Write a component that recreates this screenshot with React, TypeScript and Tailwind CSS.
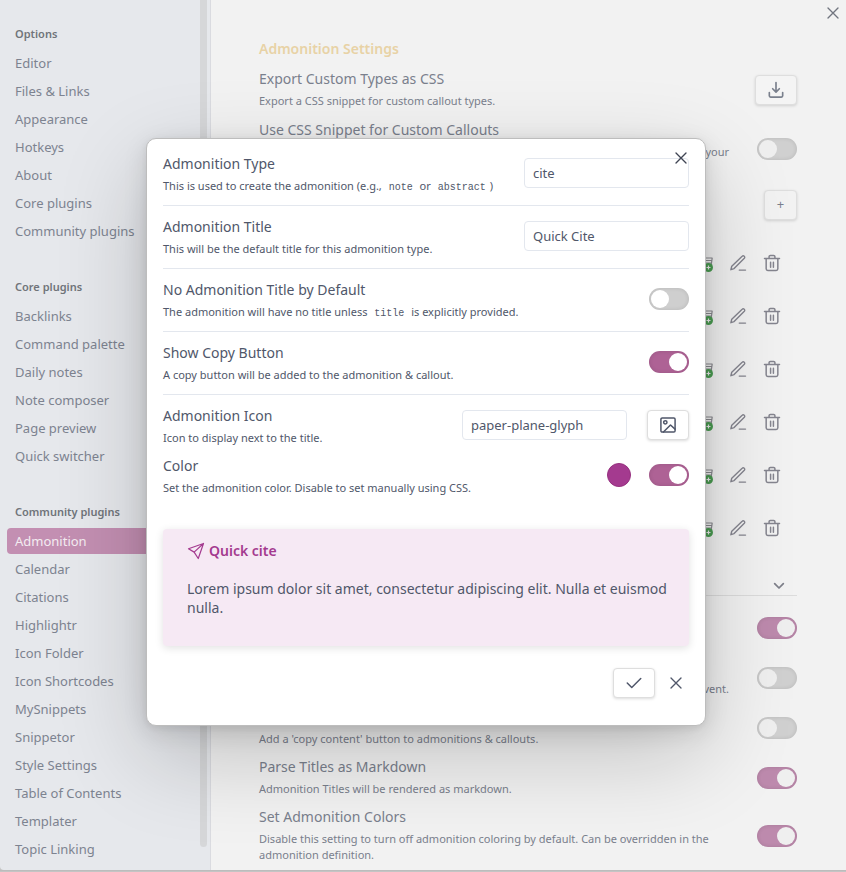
import React from "react";
import type { ReactNode } from "react";

const groups = [
  {
    title: "Options",
    items: ["Editor", "Files & Links", "Appearance", "Hotkeys", "About", "Core plugins", "Community plugins"],
  },
  {
    title: "Core plugins",
    items: ["Backlinks", "Command palette", "Daily notes", "Note composer", "Page preview", "Quick switcher"],
  },
  {
    title: "Community plugins",
    items: [
      "Admonition",
      "Calendar",
      "Citations",
      "Highlightr",
      "Icon Folder",
      "Icon Shortcodes",
      "MySnippets",
      "Snippetor",
      "Style Settings",
      "Table of Contents",
      "Templater",
      "Topic Linking",
    ],
  },
];

function Icon({ size, width = 2, className, children }: { size: number; width?: number; className?: string; children: ReactNode }) {
  return (
    <svg
      width={size}
      height={size}
      viewBox="0 0 24 24"
      fill="none"
      stroke="currentColor"
      strokeWidth={width}
      strokeLinecap="round"
      strokeLinejoin="round"
      className={className}
      aria-hidden="true"
    >
      {children}
    </svg>
  );
}

const CrossIcon = () => (
  <Icon size={16} width={2}>
    <path d="M4.5 4.5l15 15M19.5 4.5l-15 15" />
  </Icon>
);

const DownloadIcon = () => (
  <Icon size={20}>
    <path d="M4 15v4a1.5 1.5 0 0 0 1.5 1.5h13a1.5 1.5 0 0 0 1.5-1.5v-4M8 10.500l4 4 4-4M12 3v11.500" />
  </Icon>
);

const PencilIcon = () => (
  <Icon size={20} width={1.7}>
    <path d="M3.500 20l1-4.200L17 4a1.700 1.700 0 0 1 2.600 2.400L7.300 18.700zM13.500 20.500h7.500" />
  </Icon>
);

const TrashIcon = () => (
  <Icon size={20} width={1.8}>
    <path d="M3 6.500h18M8.500 6.500V4.500a1.500 1.500 0 0 1 1.500-1.500h4a1.500 1.500 0 0 1 1.500 1.500v2M5 6.500v12.500a2 2 0 0 0 2 2h10a2 2 0 0 0 2-2V6.500M10.300 11v6M13.700 11v6" />
  </Icon>
);

const PictureIcon = () => (
  <Icon size={20} width={1.8}>
    <rect x="3.500" y="3.500" width="17" height="17" rx="1.500" />
    <circle cx="8.800" cy="8.800" r="2" />
    <path d="M6.500 20.500l8.500-8.500 5.500 5" />
  </Icon>
);

const CalloutIcon = () => (
  <svg width="18" height="18" viewBox="0 0 18 18" fill="none" className="mr-[15px] text-[#8a8a90]" aria-hidden="true">
    <path d="M2 4h15.500M3 6.500h14M4 9h12.500M17.200 4l-1 7" stroke="currentColor" strokeWidth="1.200" />
    <circle cx="13.500" cy="13.500" r="4.500" fill="#4b9d52" />
    <path d="M11.500 13.500h4M13.500 11.500v4" stroke="#f0f0f0" strokeWidth="1.200" />
  </svg>
);

function Toggle({ label, on = false, faded = false }: { label: string; on?: boolean; faded?: boolean }) {
  const tone = faded
    ? "bg-[#d0d0d0] checked:bg-[#bd8aad] before:bg-[#efefef]"
    : "bg-[#cfcfcf] checked:bg-[#ae6295] before:bg-white";
  return (
    <input
      type="checkbox"
      role="switch"
      aria-label={label}
      defaultChecked={on}
      className={`h-[22px] w-10 shrink-0 appearance-none rounded-full p-[2px] shadow-[inset_0_0_4px_rgba(0,0,0,0.12)] before:block before:size-[18px] before:rounded-full before:content-[''] checked:before:ml-[18px] ${tone}`}
    />
  );
}

function Setting({ title, desc, end = false, children }: { title?: string; desc?: ReactNode; end?: boolean; children?: ReactNode }) {
  return (
    <div className="flex items-center gap-7">
      <div className="min-w-0 flex-1">
        <div className="min-h-[18px] text-[14px] leading-[18px]">{title}</div>
        <div className={`mt-[5px] min-h-4 text-[11px] leading-4 ${end ? "text-right" : ""}`}>{desc}</div>
      </div>
      {children}
    </div>
  );
}

function ModalRow({ title, desc, children }: { title: string; desc: ReactNode; children: ReactNode }) {
  return (
    <div className="flex items-center gap-5">
      <div className="min-w-0 flex-1">
        <div className="text-[14px] leading-[18px]">{title}</div>
        <div className="mt-[5px] whitespace-nowrap text-[11px] leading-4">{desc}</div>
      </div>
      <div className="flex items-center gap-5 pb-[3px]">{children}</div>
    </div>
  );
}

const Code = ({ children }: { children: ReactNode }) => (
  <code className="px-1 font-['Liberation_Mono',monospace] text-[10px] leading-none">{children}</code>
);

const field =
  "h-[30px] w-[165px] rounded-[4px] border border-[#e3e7ee] bg-white px-2 text-[13px] text-[#50576a] outline-none";
const raised = "flex h-[30px] items-center justify-center rounded-[4px] border shadow-[0_1px_3px_rgba(0,0,0,0.14)]";

function Sidebar() {
  return (
    <aside className="flex w-[211px] shrink-0 border-r border-[#dadbe0] bg-[#e6e8ec]">
      <nav className="flex min-w-0 flex-1 flex-col gap-[31px] pl-[7px] pt-[23px]">
        {groups.map((group) => (
          <section key={group.title}>
            <h2 className="mb-[5px] pl-2 text-[11px] font-semibold leading-[21px] text-[#70747a]">{group.title}</h2>
            <ul>
              {group.items.map((item) => (
                <li key={item} className="h-7 pt-px">
                  <a
                    href="#"
                    className={`block h-[26px] rounded-l-[4px] pl-2 text-[13px] leading-[26px] ${
                      item === "Admonition" ? "bg-[#c38fb2] text-[#f3ecf1]" : "text-[#7d8390]"
                    }`}
                  >
                    {item}
                  </a>
                </li>
              ))}
            </ul>
          </section>
        ))}
      </nav>
      <div className="mb-[23px] mr-[3px] w-[7px] rounded-b-full bg-[#d6d7d9]" />
    </aside>
  );
}

function SettingsPane() {
  return (
    <main className="relative min-w-0 flex-1 bg-[#f2f2f2] pl-12 pr-[49px] pt-10 text-[#7a808d]">
      <button aria-label="Close settings" className="absolute right-[5px] top-[5px] text-[#71757f]">
        <CrossIcon />
      </button>
      <h1 className="text-[14px] font-semibold leading-[18px] text-[#e8d2a6]">Admonition Settings</h1>
      <div className="mt-3 flex flex-col gap-3">
        <Setting title="Export Custom Types as CSS" desc="Export a CSS snippet for custom callout types.">
          <button aria-label="Export" className={`${raised} w-[42px] border-[#dedede] bg-[#f4f4f4]`}>
            <DownloadIcon />
          </button>
        </Setting>
        <Setting
          title="Use CSS Snippet for Custom Callouts"
          desc={<div className="h-8 text-right">your</div>}
        >
          <Toggle faded label="Use CSS Snippet for Custom Callouts" />
        </Setting>
      </div>
      <div className="mt-[14px] flex justify-end">
        <button aria-label="Add new type" className={`${raised} w-[33px] border-[#dedede] bg-[#f2f2f2] text-[13px]`}>
          +
        </button>
      </div>
      <ul className="mt-4">
        {[0, 1, 2, 3, 4, 5].map((row) => (
          <li key={row} className="flex h-[53px] items-center justify-end pr-[15px]">
            <CalloutIcon />
            <button aria-label="Edit" className="mr-[14px] text-[#85858f]">
              <PencilIcon />
            </button>
            <button aria-label="Delete" className="text-[#85858f]">
              <TrashIcon />
            </button>
          </li>
        ))}
      </ul>
      <div className="mt-[22px] flex h-5 justify-end border-b border-[#dcdcdc] pr-[10px] pt-[2px]">
        <Icon size={16} width={2.6} className="text-[#7d7f89]">
          <path d="M5.500 8.500L12 15l6.500-6.500" />
        </Icon>
      </div>
      <div className="mt-3 flex flex-col gap-[11px]">
        <Setting>
          <Toggle faded on label="Sync links" />
        </Setting>
        <Setting end desc="event.">
          <Toggle faded label="Collapse" />
        </Setting>
        <Setting desc="Add a 'copy content' button to admonitions & callouts.">
          <Toggle faded label="Add Copy Button" />
        </Setting>
        <Setting title="Parse Titles as Markdown" desc="Admonition Titles will be rendered as markdown.">
          <Toggle faded on label="Parse Titles as Markdown" />
        </Setting>
        <Setting
          title="Set Admonition Colors"
          desc="Disable this setting to turn off admonition coloring by default. Can be overridden in the admonition definition."
        >
          <Toggle faded on label="Set Admonition Colors" />
        </Setting>
      </div>
    </main>
  );
}

function AdmonitionModal() {
  return (
    <div
      role="dialog"
      aria-label="Edit admonition"
      className="relative w-[560px] max-w-full rounded-[10px] border border-[#bdbdbd] bg-white p-4 pb-[27px] text-[#50576a] shadow-[0_2px_7px_rgba(0,0,0,0.07),0_6px_25px_rgba(0,0,0,0.11),0_30px_90px_rgba(0,0,0,0.2)]"
    >
      <div className="divide-y divide-[#e3e7ee]">
        <div className="pb-[11px]">
          <ModalRow
            title="Admonition Type"
            desc={
              <>
                This is used to create the admonition (e.g., <Code>note</Code> or <Code>abstract</Code>)
              </>
            }
          >
            <input aria-label="Admonition Type" defaultValue="cite" className={field} />
          </ModalRow>
        </div>
        <div className="pb-[11px] pt-3">
          <ModalRow title="Admonition Title" desc="This will be the default title for this admonition type.">
            <input aria-label="Admonition Title" defaultValue="Quick Cite" className={field} />
          </ModalRow>
        </div>
        <div className="pb-[11px] pt-3">
          <ModalRow
            title="No Admonition Title by Default"
            desc={
              <>
                The admonition will have no title unless <Code>title</Code> is explicitly provided.
              </>
            }
          >
            <Toggle label="No Admonition Title by Default" />
          </ModalRow>
        </div>
        <div className="pb-[11px] pt-3">
          <ModalRow title="Show Copy Button" desc="A copy button will be added to the admonition & callout.">
            <Toggle on label="Show Copy Button" />
          </ModalRow>
        </div>
        <div className="pb-[11px] pt-3">
          <ModalRow title="Admonition Icon" desc="Icon to display next to the title.">
            <input aria-label="Admonition Icon" defaultValue="paper-plane-glyph" className={field} />
            <button aria-label="Choose image" className={`${raised} w-[42px] border-[#dedede] bg-white`}>
              <PictureIcon />
            </button>
          </ModalRow>
        </div>
      </div>
      <ModalRow title="Color" desc="Set the admonition color. Disable to set manually using CSS.">
        <div className="flex items-center gap-[18px]">
          <button aria-label="Pick color" className="size-6 rounded-full border border-[#96307f] bg-[#a43a8f]" />
          <Toggle on label="Color" />
        </div>
      </ModalRow>

      <section className="mt-[33px] rounded-[4px] bg-[#f6e9f4] pb-[29px] pl-6 pr-4 pt-3 shadow-[0_2px_8px_rgba(0,0,0,0.12)]">
        <h3 className="flex items-center gap-1 text-[14px] font-semibold leading-5 text-[#a43a8f]">
          <Icon size={18} width={1.6}>
            <path d="M22 2L2 9l7.500 4.500L15 22zM22 2L9.500 13.500" />
          </Icon>
          Quick cite
        </h3>
        <p className="mt-[18px] text-[14px] leading-[19px]">
          Lorem ipsum dolor sit amet, consectetur adipiscing elit. Nulla et euismod nulla.
        </p>
      </section>

      <div className="mt-[22px] flex items-center justify-end gap-[13px] pr-[5px]">
        <button aria-label="Save" className={`${raised} w-[42px] border-[#dedede] bg-white`}>
          <Icon size={18} width={2}>
            <path d="M3 12l6 6L21 6" />
          </Icon>
        </button>
        <button aria-label="Cancel">
          <CrossIcon />
        </button>
      </div>

      <button aria-label="Close" className="absolute right-4 top-[11px] text-[#3f4453]">
        <CrossIcon />
      </button>
    </div>
  );
}

export default function App() {
  return (
    <div className="relative flex h-screen flex-col overflow-hidden bg-[#c4c4c4] font-['Noto_Sans',sans-serif]">
      <div className="flex min-h-0 flex-1 overflow-hidden rounded-bl-[4px]">
        <Sidebar />
        <SettingsPane />
      </div>
      <div className="h-[2px] shrink-0 border-t border-[#bcbcbc]" />
      <div className="absolute inset-0 flex items-center justify-center pb-[8px] pl-[6px]">
        <AdmonitionModal />
      </div>
    </div>
  );
}
